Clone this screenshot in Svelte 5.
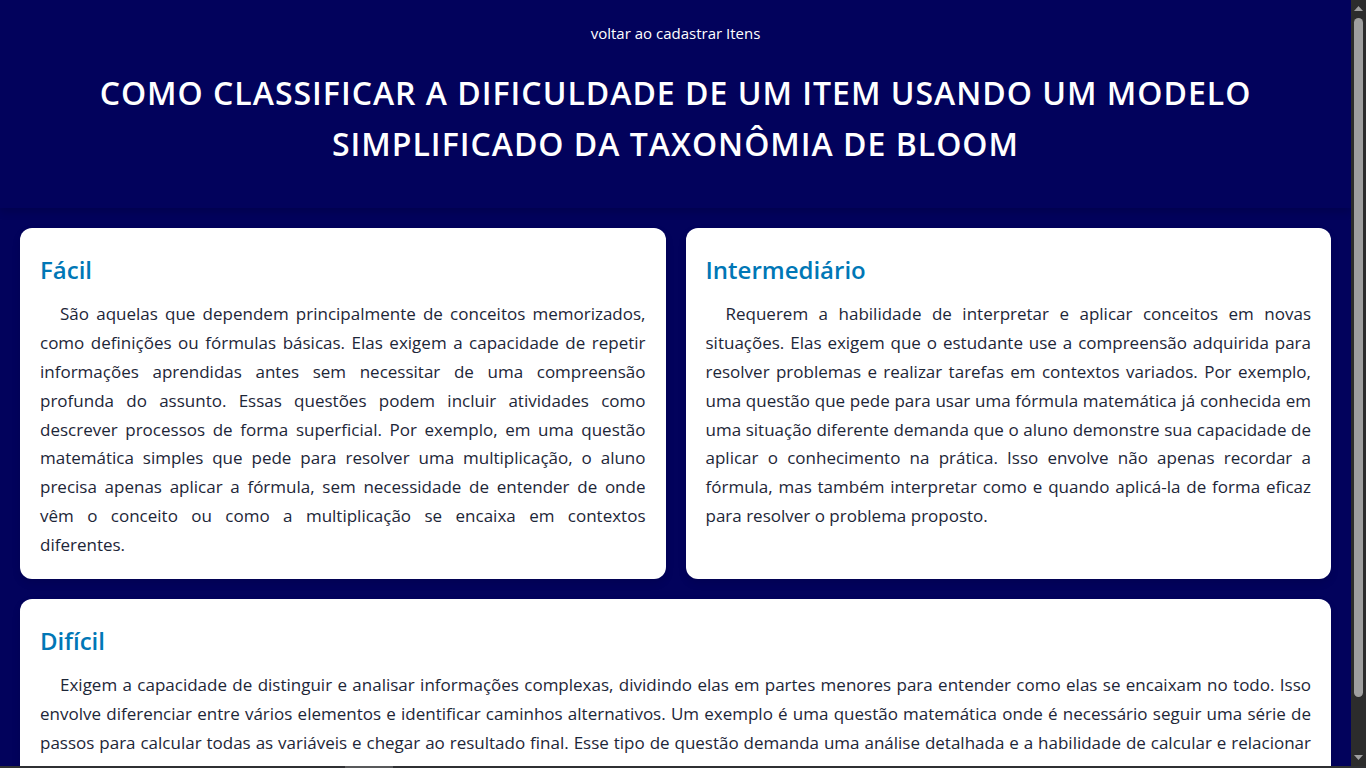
<script>
  const levels = [
    {
      id: 'facil',
      title: 'Fácil',
      text: 'São aquelas que dependem principalmente de conceitos memorizados, como definições ou fórmulas básicas. Elas exigem a capacidade de repetir informações aprendidas antes sem necessitar de uma compreensão profunda do assunto. Essas questões podem incluir atividades como descrever processos de forma superficial. Por exemplo, em uma questão matemática simples que pede para resolver uma multiplicação, o aluno precisa apenas aplicar a fórmula, sem necessidade de entender de onde vêm o conceito ou como a multiplicação se encaixa em contextos',
      closing: 'diferentes.'
    },
    {
      id: 'intermediario',
      title: 'Intermediário',
      text: 'Requerem a habilidade de interpretar e aplicar conceitos em novas situações. Elas exigem que o estudante use a compreensão adquirida para resolver problemas e realizar tarefas em contextos variados. Por exemplo, uma questão que pede para usar uma fórmula matemática já conhecida em uma situação diferente demanda que o aluno demonstre sua capacidade de aplicar o conhecimento na prática. Isso envolve não apenas recordar a fórmula, mas também interpretar como e quando aplicá-la de forma eficaz para resolver o problema',
      closing: 'proposto.'
    },
    {
      id: 'dificil',
      title: 'Difícil',
      wide: true,
      text: 'Exigem a capacidade de distinguir e analisar informações complexas, dividindo elas em partes menores para entender como elas se encaixam no todo. Isso envolve diferenciar entre vários elementos e identificar caminhos alternativos. Um exemplo é uma questão matemática onde é necessário seguir uma série de passos para calcular todas as variáveis e chegar ao resultado final. Esse tipo de questão demanda uma análise detalhada e a habilidade de calcular e relacionar diversas partes e etapas do problema, ainda com mais do que se aplicar uma fórmula',
      closing: 'direta.'
    }
  ];
</script>

<div class="window">
  <div class="view">
    <div class="page">
      <header>
        <a href="#cadastrar">voltar ao cadastrar Itens</a>
        <h1>Como classificar a dificuldade de um item usando um modelo simplificado da Taxonômia de Bloom</h1>
      </header>
      <main>
        {#each levels as level (level.id)}
          <section class:wide={level.wide} aria-labelledby={level.id}>
            <h2 id={level.id}>{level.title}</h2>
            <p>{level.text} <span class="closing">{level.closing}</span></p>
          </section>
        {/each}
      </main>
    </div>
    <div class="scrollbar" aria-hidden="true">
      <svg width="9" height="5" viewBox="0 0 9 5"><path d="M4.5 0 9 5H0Z" fill="#9f9f9f" /></svg>
      <div class="track"><div class="thumb"></div></div>
      <svg width="9" height="5" viewBox="0 0 9 5"><path d="M0 0H9L4.5 5Z" fill="#9f9f9f" /></svg>
    </div>
  </div>
  <div class="edge" aria-hidden="true"><div class="active"></div></div>
</div>

<style>
  :global(body) {
    margin: 0;
    background: #02025c;
  }
  .window {
    display: flex;
    flex-direction: column;
    height: 100vh;
    overflow: hidden;
    font-family: 'Segoe UI', 'Open Sans', 'Noto Sans', sans-serif;
    background: #02025c;
  }
  .view {
    display: flex;
    flex: 1;
    min-height: 0;
  }
  .page {
    flex: 1;
    min-width: 0;
    overflow-y: auto;
    scrollbar-width: none;
  }
  header {
    padding: 20px 20px 39px;
    text-align: center;
    color: #fff;
    box-shadow: 0 4px 8px rgba(0, 0, 0, 0.15);
  }
  a {
    display: block;
    font-size: 15px;
    line-height: 26px;
    color: #fff;
    text-decoration: none;
  }
  h1 {
    margin: 21px 0 0;
    font-size: 32px;
    line-height: 51px;
    font-weight: 600;
    letter-spacing: 1px;
    text-transform: uppercase;
  }
  main {
    display: grid;
    grid-template-columns: 1fr 1fr;
    gap: 20px;
    padding: 20px;
  }
  section {
    padding: 20px 20px 19px;
    border-radius: 12px;
    background: #fff;
    box-shadow: 0 4px 8px rgba(0, 0, 0, 0.1);
  }
  .wide {
    grid-column: 1 / -1;
  }
  h2 {
    margin: 0 0 8px;
    font-size: 24px;
    line-height: 44px;
    font-weight: 600;
    color: #0077b6;
  }
  p {
    margin: 0;
    font-size: 17px;
    line-height: 1.7;
    color: #1d2638;
    text-align: justify;
    text-indent: 20px;
  }
  .closing {
    padding-right: 20px;
  }
  .scrollbar {
    display: flex;
    flex-direction: column;
    align-items: center;
    box-sizing: border-box;
    width: 15px;
    padding: 6px 0;
    gap: 7px;
    background: #2c2c2c;
  }
  .scrollbar svg {
    flex: none;
  }
  .track {
    flex: 1;
    width: 9px;
  }
  .thumb {
    height: 93%;
    border-radius: 5px;
    background: #9f9f9f;
  }
  .edge {
    flex: none;
    height: 2px;
    padding-left: 345px;
    background: #2f3033;
  }
  .active {
    width: 48px;
    height: 2px;
    background: #58595b;
  }
</style>
